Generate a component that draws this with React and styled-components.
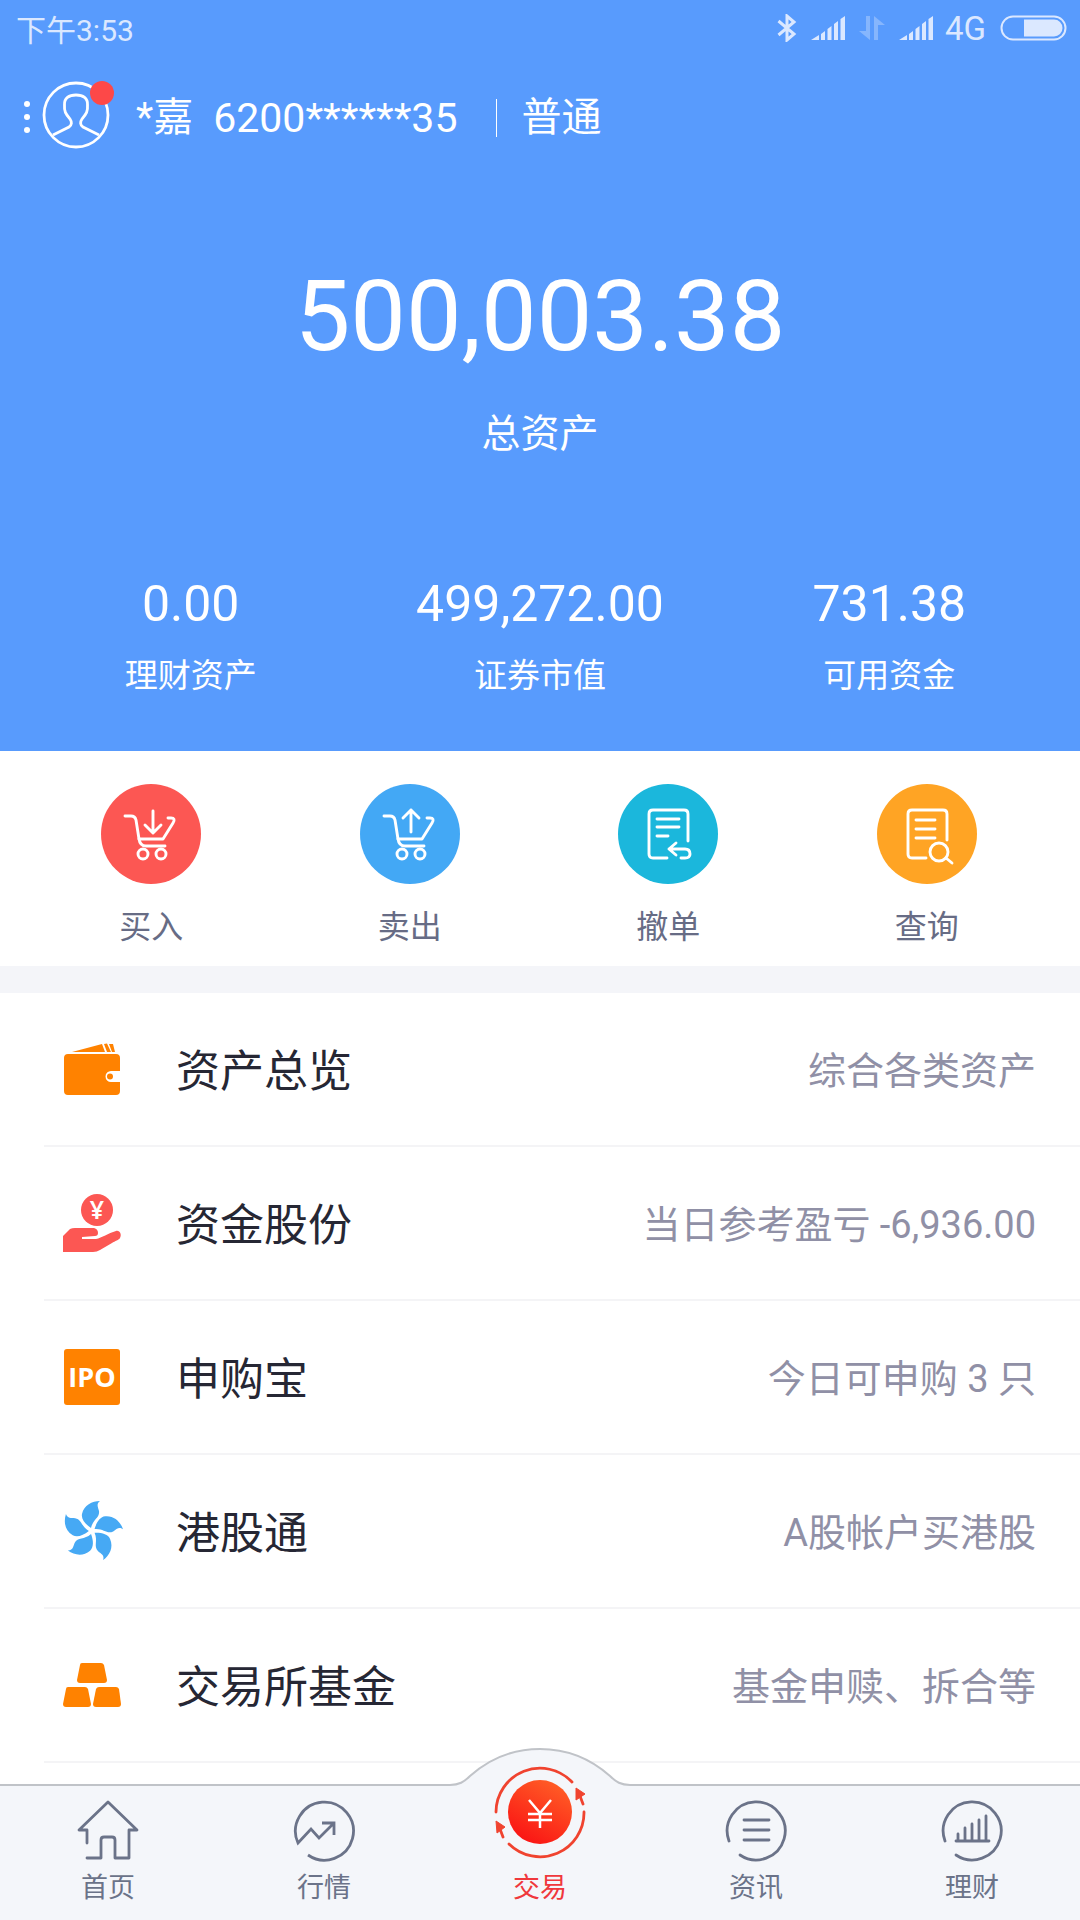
import React, { useState } from 'react';
import styled, { createGlobalStyle } from 'styled-components';

const GlobalStyle = createGlobalStyle`
  * {
    box-sizing: border-box;
  }
  body {
    margin: 0;
    background: #ffffff;
    font-family: Roboto, "Noto Sans CJK SC", sans-serif;
  }
  button {
    font-family: inherit;
    background: none;
    border: none;
    padding: 0;
    cursor: pointer;
  }
`;

const stats = [
  { value: '0.00', label: '理财资产' },
  { value: '499,272.00', label: '证券市值' },
  { value: '731.38', label: '可用资金' },
];

const Signal = () => (
  <svg width="34" height="24" viewBox="0 0 34 24" fill="currentColor">
    <path d="M0 24L8 19V24Z M10 18L14 15V24H10Z M16.500 13L20.500 10V24H16.500Z M23 8L27 5V24H23Z M29.500 3L34 0V24H29.500Z" />
  </svg>
);

const Bluetooth = () => (
  <svg width="20" height="28" viewBox="0 0 20 28" fill="none" stroke="currentColor" strokeWidth="3">
    <path d="M1.500 7L17 20L10 26V2L17 8L1.500 21" />
  </svg>
);

const DataArrows = () => (
  <svg width="26" height="24" viewBox="0 0 26 24" fill="currentColor" opacity="0.35">
    <path d="M7 0H11V24L0 15H7Z M15 24V0L26 9H19V24Z" />
  </svg>
);

const Battery = () => (
  <svg width="68" height="26" viewBox="0 0 68 26">
    <rect x="1.500" y="1.500" width="64" height="23" rx="11.500" fill="none" stroke="currentColor" strokeWidth="2" />
    <path d="M24 4.500H54A8.500 8.500 0 0 1 54 21.500H24Z" fill="currentColor" />
  </svg>
);

const Avatar = () => (
  <svg width="68" height="68" viewBox="0 0 68 68" fill="none" stroke="#fff" strokeWidth="2.800">
    <circle cx="34" cy="34" r="32" />
    <path d="M11 54L27 46C30 44 30 41 28 38C24 33 22 31 22.500 24C22 17 27 14 34 14C41 14 46 17 45.500 24C46 31 44 33 40 38C38 41 38 44 41 46L57 54" />
  </svg>
);

const Cart = ({ up }) => (
  <svg width="100" height="100" viewBox="0 0 100 100" fill="none" stroke="#fff" strokeWidth="2.900" strokeLinecap="round" strokeLinejoin="round">
    <path d="M24 32H30Q34 32 35 36L38 55Q39 62 45 62H64" />
    <path d="M38 55H62L72 39Q75 34 70 34H67" />
    <circle cx="42" cy="70" r="5" />
    <circle cx="60" cy="70" r="5" />
    {up ? <path d="M51 48V26M43 34L51 26L59 34" /> : <path d="M52 27V49M44 41L52 49L60 41" />}
  </svg>
);

const Cancel = () => (
  <svg width="100" height="100" viewBox="0 0 100 100" fill="none" stroke="#fff" strokeWidth="2.900" strokeLinecap="round" strokeLinejoin="round">
    <path d="M49 74H35Q31 74 31 70V30Q31 26 35 26H66Q70 26 70 30V57" />
    <path d="M39 35H61M39 43H61M39 52H50" />
    <path d="M58 59L51 65L58 71M51 65H67Q72 65 72 70Q72 74 67 74H63" />
  </svg>
);

const Query = () => (
  <svg width="100" height="100" viewBox="0 0 100 100" fill="none" stroke="#fff" strokeWidth="2.900" strokeLinecap="round" strokeLinejoin="round">
    <path d="M49 74H35Q31 74 31 70V30Q31 26 35 26H66Q70 26 70 30V56" />
    <path d="M39 36H58M39 45H58M39 54H58" />
    <circle cx="62" cy="68" r="9" />
    <path d="M69 74L75 79" />
  </svg>
);

const Wallet = () => (
  <svg width="60" height="60" viewBox="0 0 60 60" fill="#ff8200">
    <path d="M10 13L40 5L43 13Z M42 5L45 4.500L49 13H45Z M47 5H51L53 13H50Z" />
    <path fillRule="evenodd" d="M6 15H54Q58 15 58 19V32H49A5.500 5.500 0 0 0 49 43H58V52Q58 56 54 56H6Q2 56 2 52V19Q2 15 6 15Z" />
    <circle cx="48" cy="37.500" r="3" />
  </svg>
);

const HandCoin = () => (
  <svg width="60" height="60" viewBox="0 0 60 60" fill="#fc5753">
    <circle cx="35" cy="17" r="16" />
    <text x="35" y="26" fill="#fff" fontFamily="Noto Sans" fontSize="25" fontWeight="600" textAnchor="middle">¥</text>
    <path d="M1 43L8 36Q10 35 13 35H32Q36 36 36 40Q36 43 33 43L20 44V46H34C40 45 46 40 54 38C58 37 60 42 58 45C57 47 53 48 50 50L38 57Q35 59 31 59H1Z" />
  </svg>
);

const Bauhinia = () => (
  <svg width="64" height="64" viewBox="-32 -32 64 64" fill="#46a9f4">
    {[0, 72, 144, 216, 288].map((deg) => (
      <path
        key={deg}
        transform={`rotate(${deg})`}
        d="M-1 -3C-7 -7 -11 -12 -10 -17C-8 -26 0 -30 8 -30C4 -27 6 -24 7 -20C8 -13 1 -12 -1 -3Z"
      />
    ))}
  </svg>
);

const Ingots = () => (
  <svg width="60" height="60" viewBox="0 0 60 60" fill="#ff8200">
    <path d="M20 8H39Q41 8 42 10L45 25Q45 28 42 28H18Q15 28 15 25L18 10Q18 8 20 8Z" />
    <path d="M6 32H23Q25 32 26 34L29 49Q29 52 26 52H4Q1 52 1 49L4 34Q4 32 6 32Z" />
    <path d="M37 32H54Q56 32 57 34L59 49Q59 52 56 52H34Q31 52 31 49L34 34Q35 32 37 32Z" />
  </svg>
);

const Home = () => (
  <svg width="64" height="64" viewBox="0 0 64 64" fill="none" stroke="currentColor" strokeWidth="2.800" strokeLinejoin="round" strokeLinecap="round">
    <path d="M11 45V32H3L32 4L61 32H53V60H39V42Q39 39 36 39H28Q25 39 25 42V60H11" />
  </svg>
);

const OpenRing = () => <path d="M5 43A29 29 0 1 1 16 57" />;

const Quotes = () => (
  <svg width="64" height="64" viewBox="0 0 64 64" fill="none" stroke="currentColor" strokeWidth="2.800">
    <path d="M16 57A29 29 0 1 0 6 45L19 31L27 40L42 25M30 25H42V37" />
  </svg>
);

const News = () => (
  <svg width="64" height="64" viewBox="0 0 64 64" fill="none" stroke="currentColor" strokeWidth="2.800" strokeLinecap="round">
    <OpenRing />
    <path d="M20 22H45M20 32H45M20 42H45" />
  </svg>
);

const Finance = () => (
  <svg width="64" height="64" viewBox="0 0 64 64" fill="none" stroke="currentColor" strokeWidth="2.800" strokeLinecap="round">
    <OpenRing />
    <path d="M16 43H49M18 43V36M25 43V30M32 43V26M39 43V22M46 43V18" />
  </svg>
);

const Trade = () => (
  <svg width="100" height="100" viewBox="0 0 100 100">
    <defs>
      <linearGradient id="coin" x1="0.8" y1="0.1" x2="0.3" y2="1">
        <stop offset="0" stopColor="#ff5a25" />
        <stop offset="1" stopColor="#fa1414" />
      </linearGradient>
    </defs>
    <circle cx="50" cy="50" r="32" fill="url(#coin)" />
    <path d="M39 38L50 51L61 38M38 52H62M38 58H62M50 51V66" fill="none" stroke="#fff" strokeWidth="2.500" />
    <g fill="none" stroke="#f0432f" strokeWidth="2.800" strokeLinecap="round">
      <path d="M6 50A44 44 0 0 1 82 20" />
      <path d="M94 50A44 44 0 0 1 19 82" />
      <path d="M90 34L93 42M10 67L13 75" />
    </g>
    <path d="M86 26L95 32L86 38Z M6 59L15 65L7 71Z" fill="#f0432f" stroke="#f0432f" />
  </svg>
);

const actions = [
  { label: '买入', color: '#fc5753', icon: <Cart /> },
  { label: '卖出', color: '#43a8f5', icon: <Cart up /> },
  { label: '撤单', color: '#1bb7dc', icon: <Cancel /> },
  { label: '查询', color: '#ffa424', icon: <Query /> },
];

const tabs = [
  { label: '首页', icon: <Home /> },
  { label: '行情', icon: <Quotes /> },
  { label: '交易', icon: <Trade /> },
  { label: '资讯', icon: <News /> },
  { label: '理财', icon: <Finance /> },
];

const App = () => {
  const [currentTab, setCurrentTab] = useState('交易');

  const rows = [
    { title: '资产总览', note: '综合各类资产', icon: <Wallet /> },
    { title: '资金股份', note: '当日参考盈亏 -6,936.00', icon: <HandCoin /> },
    { title: '申购宝', note: '今日可申购 3 只', icon: <IpoBadge>IPO</IpoBadge> },
    { title: '港股通', note: 'A股帐户买港股', icon: <Bauhinia /> },
    { title: '交易所基金', note: '基金申赎、拆合等', icon: <Ingots /> },
  ];

  return (
    <Page>
      <GlobalStyle />
      <Hero>
        <StatusBar>
          <span>下午3:53</span>
          <StatusIcons>
            <Bluetooth />
            <Signal />
            <DataArrows />
            <Signal />
            <Network>4G</Network>
            <Battery />
          </StatusIcons>
        </StatusBar>

        <Account>
          <AccountButton aria-label="账户">
            <Dots><i /><i /><i /></Dots>
            <AvatarWrap>
              <Avatar />
              <RedDot />
            </AvatarWrap>
          </AccountButton>
          <AccountInfo>
            <span>*嘉</span>
            <AccountNumber>6200******35</AccountNumber>
            <AccountType>普通</AccountType>
          </AccountInfo>
        </Account>

        <Total>500,003.38</Total>
        <TotalLabel>总资产</TotalLabel>

        <Stats>
          {stats.map((s) => (
            <div key={s.label}>
              <StatValue>{s.value}</StatValue>
              <StatLabel>{s.label}</StatLabel>
            </div>
          ))}
        </Stats>
      </Hero>

      <Actions>
        {actions.map((a) => (
          <Action key={a.label}>
            <ActionIcon $color={a.color}>{a.icon}</ActionIcon>
            {a.label}
          </Action>
        ))}
      </Actions>

      <List>
        {rows.map((r) => (
          <li key={r.title}>
            <Row>
              <RowIcon>{r.icon}</RowIcon>
              <RowTitle>{r.title}</RowTitle>
              <RowNote>{r.note}</RowNote>
            </Row>
          </li>
        ))}
      </List>

      <TabBar>
        <Bump width="180" height="42" viewBox="0 0 180 42">
          <path d="M0 37C9 37 14 34 20 28C38 12 60 1 90 1C120 1 142 12 160 28C166 34 171 37 180 37V42H0Z" fill="#f4f6fa" />
          <path d="M0 37C9 37 14 34 20 28C38 12 60 1 90 1C120 1 142 12 160 28C166 34 171 37 180 37" fill="none" stroke="#c0c3c8" strokeWidth="2" />
        </Bump>
        {tabs.map((t) => (
          <Tab key={t.label} $active={t.label === currentTab} onClick={() => setCurrentTab(t.label)}>
            {t.icon}
            {t.label}
          </Tab>
        ))}
      </TabBar>
    </Page>
  );
};

const Page = styled.div`
  display: flex;
  flex-direction: column;
  min-height: 100vh;
`;

const Hero = styled.header`
  display: flex;
  flex-direction: column;
  padding-bottom: 55px;
  background: #589bfd;
  color: #ffffff;
`;

const StatusBar = styled.div`
  display: flex;
  justify-content: space-between;
  align-items: center;
  height: 56px;
  padding: 0 12px 0 16px;
  font-size: 30px;
  color: #dbe8ff;
`;

const StatusIcons = styled.div`
  display: flex;
  align-items: center;
  gap: 14px;
`;

const Network = styled.span`
  font-size: 33px;
  margin-left: -2px;
`;

const Account = styled.div`
  display: flex;
  align-items: center;
  height: 118px;
  padding-left: 24px;
`;

const AccountButton = styled.button`
  display: flex;
  align-items: center;
  gap: 12px;
`;

const Dots = styled.span`
  display: flex;
  flex-direction: column;
  gap: 7px;
  padding-top: 4px;

  i {
    width: 6px;
    height: 6px;
    border-radius: 50%;
    background: #ffffff;
  }
`;

const AvatarWrap = styled.span`
  position: relative;
  display: flex;
`;

const RedDot = styled.span`
  position: absolute;
  top: 0;
  right: -4px;
  width: 24px;
  height: 24px;
  border-radius: 50%;
  background: #fd4848;
`;

const AccountInfo = styled.div`
  display: flex;
  align-items: center;
  padding: 6px 0 0 26px;
  font-size: 40px;
  line-height: 48px;
`;

const AccountNumber = styled.span`
  margin-left: 20px;
  font-size: 41px;
`;

const AccountType = styled.span`
  display: flex;
  align-items: center;
  margin-left: 39px;

  &::before {
    content: '';
    width: 1px;
    height: 38px;
    margin-right: 24px;
    background: #ffffff;
  }
`;

const Total = styled.div`
  margin-top: 82px;
  font-size: 99px;
  line-height: 120px;
  text-align: center;
`;

const TotalLabel = styled.div`
  margin-top: 34px;
  font-size: 39px;
  line-height: 48px;
  text-align: center;
`;

const Stats = styled.div`
  display: grid;
  grid-template-columns: repeat(3, 1fr);
  margin-top: 116px;
  padding: 0 16px;
  text-align: center;
`;

const StatValue = styled.div`
  font-size: 50px;
  line-height: 60px;
`;

const StatLabel = styled.div`
  margin-top: 22px;
  font-size: 33px;
  line-height: 40px;
`;

const Actions = styled.section`
  display: grid;
  grid-template-columns: repeat(4, 1fr);
  padding: 33px 24px 18px 22px;
  border-bottom: 27px solid #f4f5f9;
`;

const Action = styled.button`
  display: flex;
  flex-direction: column;
  align-items: center;
  gap: 22px;
  font-size: 32px;
  line-height: 42px;
  color: #676c85;
`;

const ActionIcon = styled.span`
  display: flex;
  width: 100px;
  height: 100px;
  border-radius: 50%;
  background: ${(props) => props.$color};
`;

const List = styled.ul`
  flex: 1;
  list-style: none;
  margin: 0;
  padding: 0 0 20px 44px;

  li {
    border-bottom: 2px solid #f4f4f6;
  }
`;

const Row = styled.button`
  display: flex;
  align-items: center;
  width: 100%;
  height: 152px;
  padding-right: 44px;
`;

const RowIcon = styled.span`
  display: flex;
  justify-content: center;
  width: 96px;
`;

const IpoBadge = styled.span`
  width: 56px;
  border-radius: 3px;
  background: #ff8200;
  color: #ffffff;
  font-family: "Open Sans", sans-serif;
  font-size: 27px;
  font-weight: 700;
  line-height: 56px;
`;

const RowTitle = styled.span`
  margin-left: 36px;
  padding-top: 6px;
  font-size: 44px;
  line-height: 56px;
  color: #262734;
`;

const RowNote = styled.span`
  margin-left: auto;
  padding-top: 4px;
  font-size: 38px;
  line-height: 48px;
  color: #9090a6;
`;

const TabBar = styled.nav`
  position: relative;
  display: grid;
  grid-template-columns: repeat(5, 1fr);
  grid-template-rows: 100%;
  height: 136px;
  border-top: 2px solid #c0c3c8;
  background: #f4f6fa;
`;

/* sits over the top border, behind the middle tab */
const Bump = styled.svg`
  position: absolute;
  bottom: 130px;
  left: 50%;
  transform: translateX(-50%);
`;

const Tab = styled.button`
  position: relative;
  display: flex;
  flex-direction: column;
  justify-content: flex-end;
  align-items: center;
  gap: 8px;
  padding-bottom: 14px;
  font-size: 27px;
  line-height: 36px;
  color: ${(props) => (props.$active ? '#f0383c' : '#6b7389')};

  svg {
    flex-shrink: 0;
  }
`;

export default App;
